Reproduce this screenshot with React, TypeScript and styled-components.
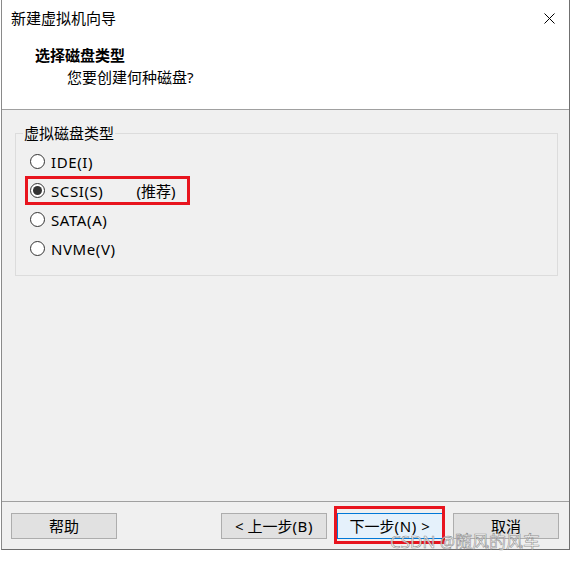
import React from "react";
import styled, { createGlobalStyle } from "styled-components";

const Global = createGlobalStyle`
  html, body {
    margin: 0;
    padding: 0;
    background: #ffffff;
  }
  body {
    font-family: "Noto Sans", "Noto Sans CJK SC", sans-serif;
    font-size: 15px;
    color: #000;
  }
`;

const Page = styled.div`
  position: relative;
  width: 579px;
  height: 561px;
  overflow: hidden;
`;

const Window = styled.div`
  margin-left: 1px;
  width: 569px;
  height: 550px;
  box-sizing: border-box;
  border-left: 1px solid #8a8a8a;
  border-right: 1px solid #707070;
  border-bottom: 1px solid #6e6e6e;
  display: flex;
  flex-direction: column;
  background: #f0f0f0;
`;

const Header = styled.div`
  height: 110px;
  box-sizing: border-box;
  background: #ffffff;
  border-bottom: 1px solid #a0a0a0;
  display: flex;
  flex-direction: column;
`;

const TitleBar = styled.div`
  height: 36px;
  display: flex;
  align-items: center;
  justify-content: space-between;
  padding: 0 14px 0 9px;
  line-height: 20px;
`;

const CloseButton = styled.div`
  width: 11px;
  height: 11px;
  display: flex;
`;

const Heading = styled.div`
  margin-top: 9px;
  padding-left: 33px;
  font-weight: 700;
  line-height: 20px;
`;

const SubHeading = styled.div`
  margin-top: 2px;
  padding-left: 65px;
  line-height: 20px;
`;

const Body = styled.div`
  flex: 1;
  padding: 13px 11px 0 13px;
`;

const GroupBox = styled.fieldset`
  margin: 0;
  padding: 7px 7px 15px 7px;
  border: 1px solid #dcdcdc;
  display: flex;
  flex-direction: column;
  gap: 6px;
`;

const Legend = styled.legend`
  padding: 0 1px;
  line-height: 20px;
`;

const RadioRow = styled.div<{ $marked?: boolean }>`
  width: 159px;
  height: 23px;
  margin-left: 5px;
  display: flex;
  align-items: center;
  line-height: 20px;
  outline: ${(p) => (p.$marked ? "3px solid #e8141e" : "none")};
`;

const RadioCircle = styled.span<{ $checked?: boolean }>`
  width: 15px;
  height: 15px;
  box-sizing: border-box;
  margin-left: 2px;
  margin-right: 6px;
  border: 1px solid #333333;
  border-radius: 50%;
  background: #ffffff;
  display: flex;
  align-items: center;
  justify-content: center;
  flex-shrink: 0;
  &::after {
    content: "";
    width: 9px;
    height: 9px;
    border-radius: 50%;
    background: #333333;
    display: ${(p) => (p.$checked ? "block" : "none")};
  }
`;

const Latin = styled.span`
  letter-spacing: 0.6px;
`;

const Note = styled.span`
  margin-left: 33px;
`;

const Footer = styled.div`
  height: 48px;
  box-sizing: border-box;
  border-top: 1px solid #a0a0a0;
  padding: 11px 10px 10px 9px;
  display: flex;
  gap: 10px;
`;

const Spacer = styled.div`
  flex: 1;
`;

const Button = styled.div<{ $default?: boolean; $marked?: boolean }>`
  position: relative;
  width: 106px;
  height: 26px;
  box-sizing: border-box;
  border: 1px solid ${(p) => (p.$default ? "#0078d7" : "#adadad")};
  background: ${(p) => (p.$default ? "#e5f1fb" : "#e1e1e1")};
  display: flex;
  align-items: center;
  justify-content: center;
  line-height: 20px;
  white-space: pre;
  &::after {
    content: "";
    display: ${(p) => (p.$marked ? "block" : "none")};
    position: absolute;
    left: -4px;
    right: -3px;
    top: -8px;
    bottom: -6px;
    border: 3px solid #e8141e;
  }
`;

const Watermark = styled.div`
  position: absolute;
  left: 390px;
  top: 531px;
  font-size: 17px;
  line-height: 22px;
  color: rgba(255, 255, 255, 0.8);
  -webkit-text-stroke: 0.6px rgba(95, 95, 95, 0.7);
  white-space: nowrap;
  pointer-events: none;
`;

const options = [
  { label: "IDE(I)", checked: false },
  { label: "SCSI(S)", checked: true, note: "(推荐)" },
  { label: "SATA(A)", checked: false },
  { label: "NVMe(V)", checked: false },
];

export default function App() {
  return (
    <Page>
      <Global />
      <Window>
        <Header>
          <TitleBar>
            <span>新建虚拟机向导</span>
            <CloseButton>
              <svg width="11" height="11" viewBox="0 0 11 11">
                <path d="M0.5 0.5 L10.5 10.5 M10.5 0.5 L0.5 10.5" stroke="#000" strokeWidth="1" fill="none" />
              </svg>
            </CloseButton>
          </TitleBar>
          <Heading>选择磁盘类型</Heading>
          <SubHeading>您要创建何种磁盘?</SubHeading>
        </Header>
        <Body>
          <GroupBox>
            <Legend>虚拟磁盘类型</Legend>
            {options.map((o) => (
              <RadioRow key={o.label} $marked={o.checked}>
                <RadioCircle $checked={o.checked} />
                <Latin>{o.label}</Latin>
                {o.note && <Note>{o.note}</Note>}
              </RadioRow>
            ))}
          </GroupBox>
        </Body>
        <Footer>
          <Button>帮助</Button>
          <Spacer />
          <Button>&lt; 上一步<Latin>(B)</Latin></Button>
          <Button $default $marked>下一步<Latin>(N) &gt;</Latin></Button>
          <Button>取消</Button>
        </Footer>
      </Window>
      <Watermark>CSDN @随风的风车</Watermark>
    </Page>
  );
}
